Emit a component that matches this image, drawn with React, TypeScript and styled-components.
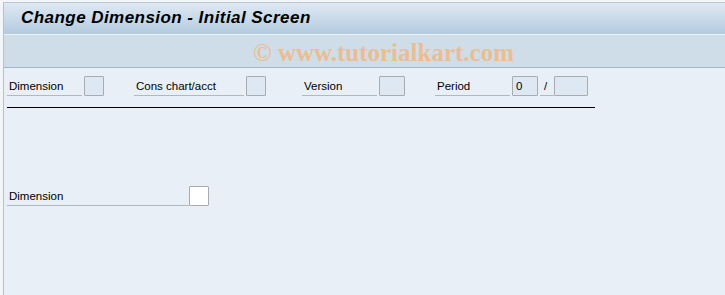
import React from 'react'
import styled, { createGlobalStyle } from 'styled-components'

const GlobalStyle = createGlobalStyle`
  html, body {
    margin: 0;
    padding: 0;
    background: #f3f6f9;
  }
  #root {
    width: 725px;
    height: 295px;
    overflow: hidden;
  }
`

interface IField {
  label: string
  labelWidth: number
  boxWidth: number
  value?: string
  gapBefore: number
}

const headerFields: IField[] = [
  { label: 'Dimension', labelWidth: 75, boxWidth: 20, gapBefore: 0 },
  { label: 'Cons chart/acct', labelWidth: 110, boxWidth: 20, gapBefore: 30 },
  { label: 'Version', labelWidth: 75, boxWidth: 26, gapBefore: 36 },
  { label: 'Period', labelWidth: 75, boxWidth: 26, value: '0', gapBefore: 30 },
]

/**
 * SAP style initial screen
 */
const App = () => {
  return (
    <>
      <GlobalStyle />
      <Window>
        <TitleBar>
          <Title>Change Dimension - Initial Screen</Title>
        </TitleBar>
        <Toolbar>
          <Watermark>© www.tutorialkart.com</Watermark>
        </Toolbar>
        <Body>
          <FieldRow>
            {headerFields.map((f) => (
              <Field key={f.label} gapBefore={f.gapBefore}>
                <Label width={f.labelWidth}>{f.label}</Label>
                <Box width={f.boxWidth}>{f.value}</Box>
              </Field>
            ))}
            <Field gapBefore={2}>
              <Label width={14} center>
                /
              </Label>
              <Box width={34} noGap />
            </Field>
          </FieldRow>
          <Separator />
          <SelectRow>
            <Label width={182}>Dimension</Label>
            <Box width={20} white noGap />
          </SelectRow>
        </Body>
      </Window>
    </>
  )
}

const Window = styled.div`
  box-sizing: border-box;
  width: 722px;
  height: 293px;
  margin: 2px 0 0 3px;
  border-left: 1px solid #b4c2cf;
  border-top: 1px solid #bcc9d5;
  background: #e9eff6;
  display: flex;
  flex-direction: column;
  font-family: 'Liberation Sans', Arial, sans-serif;
`

const TitleBar = styled.div`
  height: 30px;
  background: linear-gradient(#dfe9f3, #b3cadf);
  display: flex;
  align-items: center;
  padding-left: 17px;
  padding-bottom: 1px;
`

const Title = styled.h1`
  margin: 0;
  font-family: 'Liberation Sans', Arial, sans-serif;
  font-size: 17px;
  font-style: italic;
  font-weight: bold;
  color: #000;
  letter-spacing: 0.45px;
`

const Toolbar = styled.div`
  height: 32px;
  background: #cfdde8;
  border-top: 1px solid #eef3f8;
  border-bottom: 1px solid #a3b6c8;
  display: flex;
  align-items: center;
  justify-content: center;
  padding-left: 38px;
`

const Watermark = styled.span`
  font-family: 'Liberation Serif', 'Times New Roman', serif;
  font-size: 25px;
  font-weight: bold;
  color: #ebbd93;
  margin-top: 3px;
`

const Body = styled.div`
  flex: 1;
  padding: 8px 0 0 3px;
`

const FieldRow = styled.div`
  display: flex;
  align-items: flex-end;
  height: 20px;
`

const Field = styled.div<{ gapBefore: number }>`
  display: flex;
  align-items: flex-end;
  margin-left: ${({ gapBefore }) => gapBefore}px;
`

const Label = styled.div<{ width: number; center?: boolean }>`
  box-sizing: border-box;
  width: ${({ width }) => width}px;
  height: 20px;
  line-height: 21px;
  padding-left: ${({ center }) => (center ? '4px' : '2px')};
  border-bottom: 1px solid #b0b8c0;
  font-size: 11.5px;
  color: #000;
  white-space: nowrap;
`

const Box = styled.div<{ width: number; white?: boolean; noGap?: boolean }>`
  box-sizing: border-box;
  width: ${({ width }) => width}px;
  height: 20px;
  margin-left: ${({ noGap }) => (noGap ? '0' : '2px')};
  border: 1px solid #a8acb0;
  border-radius: 1px;
  background: ${({ white }) => (white ? '#ffffff' : '#dde8f3')};
  font-size: 11.5px;
  line-height: 19px;
  padding-left: 3px;
  color: #000;
`

const Separator = styled.div`
  width: 588px;
  height: 1px;
  background: #000;
  margin-top: 11px;
`

const SelectRow = styled.div`
  display: flex;
  align-items: flex-end;
  margin-top: 78px;
`

export default App
